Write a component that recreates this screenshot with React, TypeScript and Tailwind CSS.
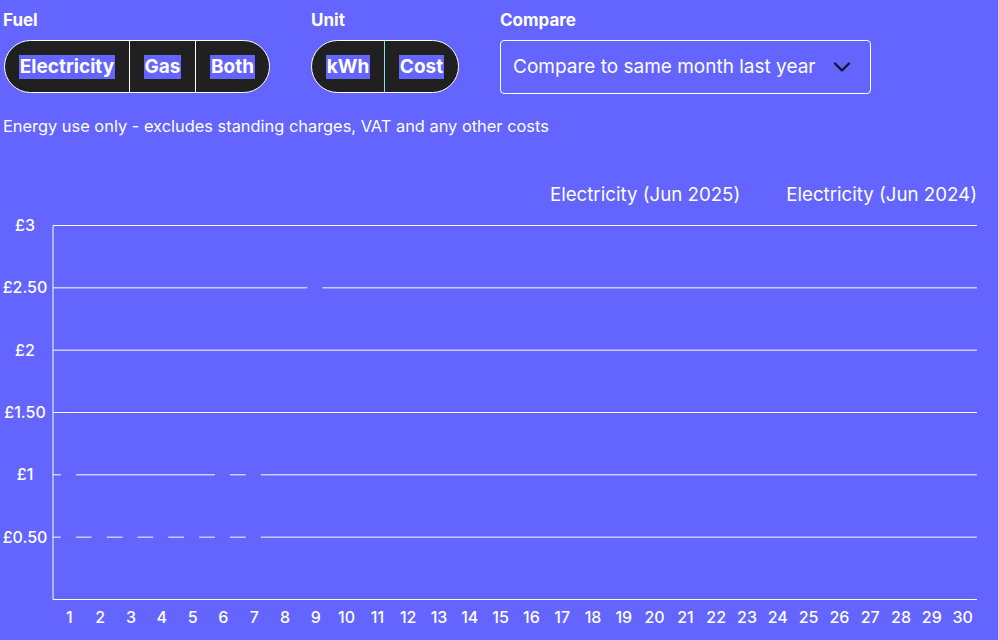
import { ChevronDown } from "lucide-react";

const FONT = "font-['Inter','Noto_Sans',sans-serif]";

const FUELS = [
  { t: "Electricity", w: "w-[124px]" },
  { t: "Gas", w: "w-[66px]" },
  { t: "Both", w: "w-[74px]" },
];
const UNITS = [
  { t: "kWh", w: "w-[72px]" },
  { t: "Cost", w: "w-[74px]" },
];

// chart geometry (svg coords)
const LEFT = 53;
const RIGHT = 977;
const TOP = 17.5;
const STEP = 62.33;
const DAYS = 30;
const BAND = (RIGHT - LEFT) / DAYS;
const Y_LABELS = ["£3", "£2.50", "£2", "£1.50", "£1", "£0.50"];

// bands whose empty bars cut through a gridline
const GAPS: Record<number, number[]> = {
  1: [9],
  4: [1, 6, 7],
  5: [1, 2, 3, 4, 5, 6, 7],
};

function gridSegments(row: number) {
  const gaps = (GAPS[row] || []).map((d) => LEFT + BAND * (d - 0.5));
  const segs: [number, number][] = [];
  let start = LEFT;
  for (const c of gaps) {
    segs.push([start, c - 7.5]);
    start = c + 7.5;
  }
  segs.push([start, RIGHT]);
  return segs;
}

function Toggle({ items, accentLast }: { items: { t: string; w: string }[]; accentLast?: boolean }) {
  return (
    <div className="flex h-[53px] rounded-full border border-white bg-[#202020] overflow-hidden">
      {items.map((it, i) => (
        <div
          key={it.t}
          className={
            "flex items-center justify-center " +
            it.w +
            " " +
            (i > 0 ? (accentLast ? "border-l border-[#7ee0f0]" : "border-l border-white") : "")
          }
        >
          <span className="bg-[#6464ff] text-white font-bold text-[19px] leading-6 px-px">{it.t}</span>
        </div>
      ))}
    </div>
  );
}

export default function App() {
  return (
    <div className={`w-[998px] h-[640px] bg-[#6464ff] text-white overflow-hidden ${FONT}`}>
      <div className="px-[3px] pt-[8px]">
        {/* Controls */}
        <div className="flex">
          <div>
            <p className="font-bold text-[17px] leading-6 mb-2">Fuel</p>
            <div className="pl-px">
              <Toggle items={FUELS} />
            </div>
          </div>
          <div className="ml-[41px]">
            <p className="font-bold text-[17px] leading-6 mb-2">Unit</p>
            <Toggle items={UNITS} accentLast />
          </div>
          <div className="ml-[41px]">
            <p className="font-bold text-[17px] leading-6 mb-2">Compare</p>
            <div className="flex items-center justify-between w-[371px] h-[54px] rounded border border-white pl-3 pr-[14px]">
              <span className="text-[19px]">Compare to same month last year</span>
              <ChevronDown className="w-7 h-7 text-[#14142b]" strokeWidth={2} />
            </div>
          </div>
        </div>

        <p className="mt-5 text-[16.4px] leading-6">
          Energy use only - excludes standing charges, VAT and any other costs
        </p>

        {/* Legend */}
        <div className="flex justify-end gap-[46px] mt-[44px] pr-[18px] text-[18.7px] leading-[26px]">
          <span>Electricity (Jun 2025)</span>
          <span>Electricity (Jun 2024)</span>
        </div>
      </div>

      {/* Chart */}
      <svg width={998} height={433} className="block" fontFamily="Inter, 'Noto Sans', sans-serif">
        {Y_LABELS.map((l, r) =>
          gridSegments(r).map(([a, b], k) => (
            <line key={`${r}-${k}`} x1={a} x2={b} y1={TOP + STEP * r} y2={TOP + STEP * r} stroke="white" strokeWidth={1} />
          ))
        )}
        <line x1={LEFT} x2={RIGHT} y1={TOP + STEP * 6} y2={TOP + STEP * 6} stroke="white" strokeWidth={1} />
        <line x1={LEFT} x2={LEFT} y1={TOP} y2={TOP + STEP * 6} stroke="white" strokeWidth={1} />
        {Y_LABELS.map((l, r) => (
          <text key={l} x={25} y={TOP + STEP * r + 5.5} textAnchor="middle" fill="white" fontSize={16} fontWeight={500}>
            {l}
          </text>
        ))}
        {Array.from({ length: DAYS }, (_, i) => (
          <text
            key={i}
            x={LEFT + BAND * (i + 0.5) + 1}
            y={TOP + STEP * 6 + 24}
            textAnchor="middle"
            fill="white"
            fontSize={16}
            fontWeight={500}
          >
            {i + 1}
          </text>
        ))}
      </svg>
    </div>
  );
}
